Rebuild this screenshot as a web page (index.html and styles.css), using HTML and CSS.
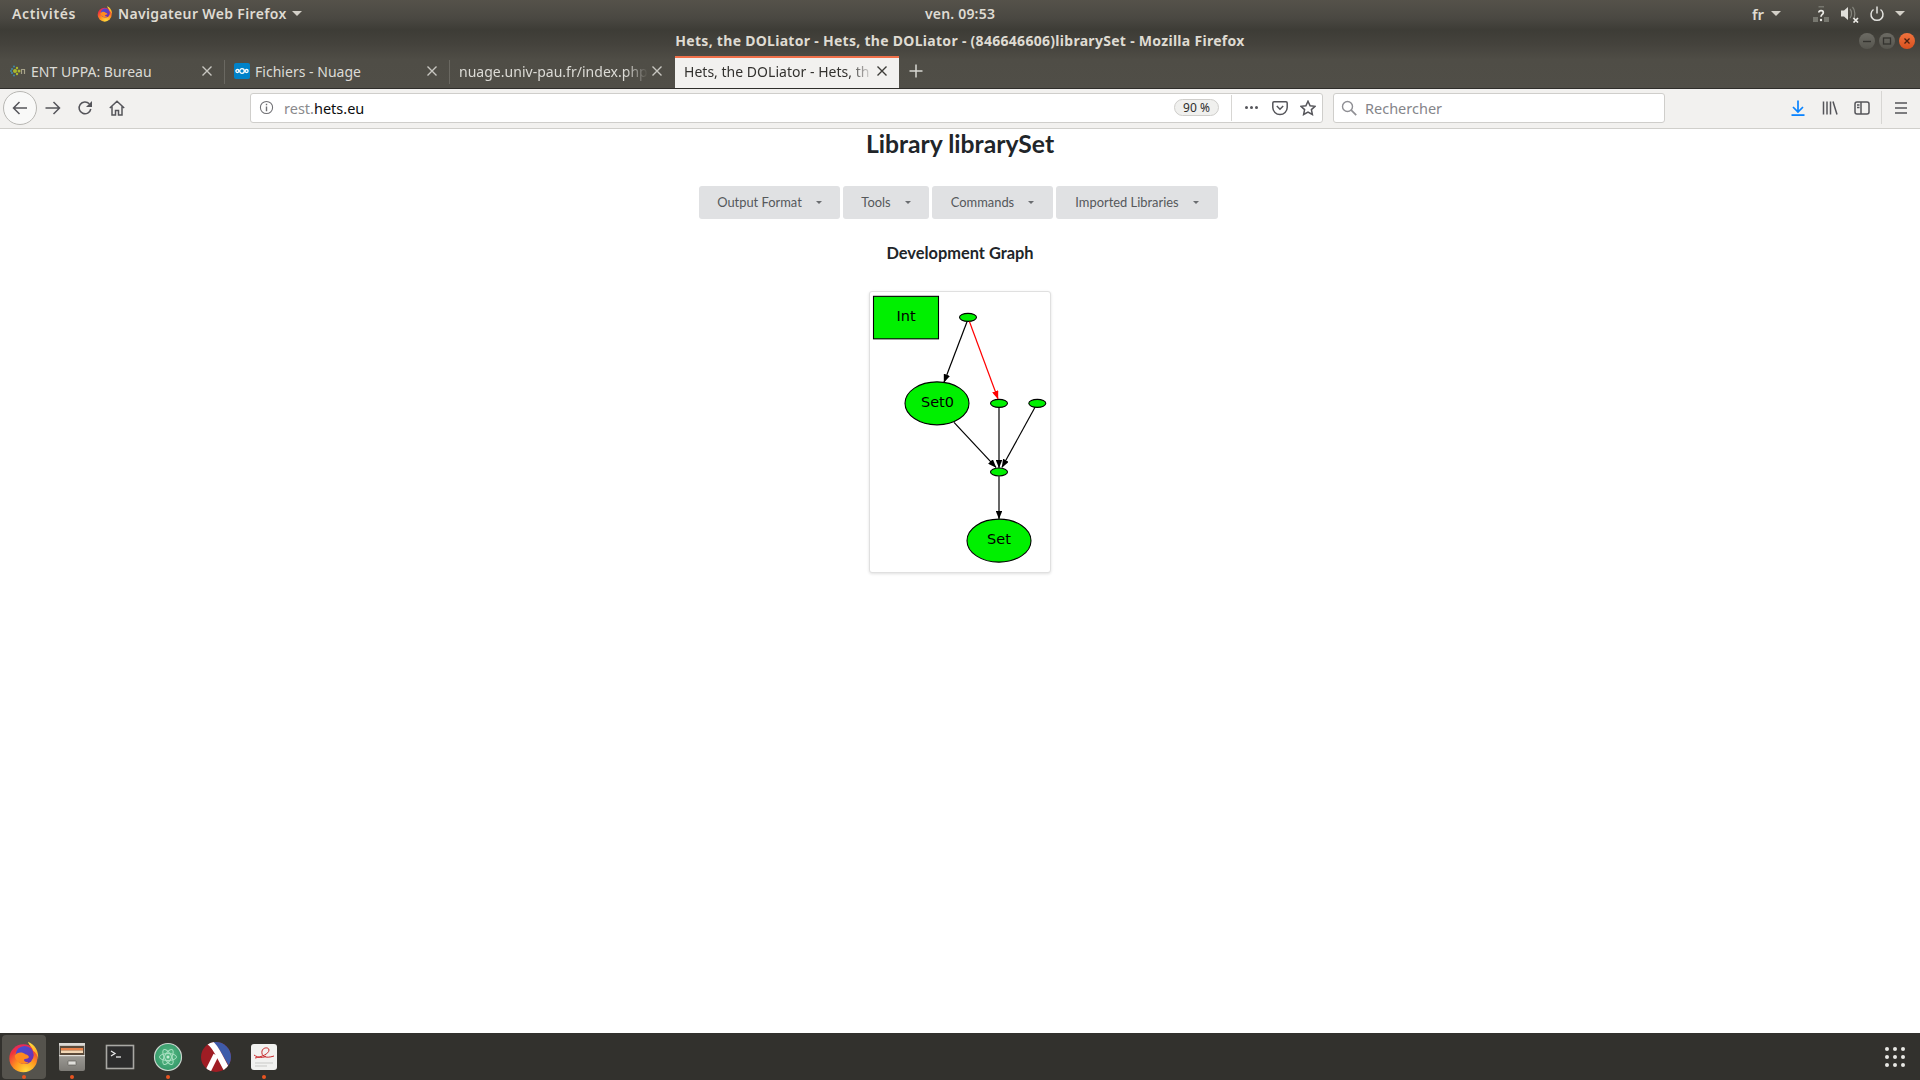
FILE: index.html
```html
<!DOCTYPE html>
<html lang="fr">
<head>
<meta charset="utf-8">
<title>Hets</title>
<link rel="stylesheet" href="styles.css">
</head>
<body>
<div class="screen">
  <header class="chrome-top">
    <div class="panel">
      <div class="panel-left">
        <span class="panel-item">Activités</span>
        <span class="panel-app">
          <svg class="ico16" viewBox="0 0 24 24"><use href="#firefox"/></svg>
          <span>Navigateur Web Firefox</span><i class="caret app-caret"></i>
        </span>
      </div>
      <div class="panel-clock">ven. 09:53</div>
      <div class="panel-right">
        <span class="lang">fr</span><i class="caret lang-caret"></i>
        <svg class="tray net" viewBox="0 0 16 16"><path fill="#77776f" d="M0 11h5v5H0zM11 11h5v5h-5zM5.500 0H11v1.500H5.500z"/><path fill="none" stroke="#ecebe6" stroke-width="1.700" d="M5.800 6.500c.3-2.600 4.600-2.400 4.500.2 0 1.700-2.300 1.700-2.300 4"/><circle cx="8" cy="14" r="1.200" fill="#ecebe6"/></svg>
        <svg class="tray vol" viewBox="0 0 18 18"><path fill="#e0dfda" d="M0 5.500h3L7 2v13L3 11.500H0z"/><path fill="none" stroke="#85857d" stroke-width="1.200" d="M9 4c2 2 2 7 0 9M11.500 2c3 3 3 10 .5 12"/><path stroke="#ecebe6" stroke-width="1.700" d="M12.500 13l4.500 4.500M17 13l-4.500 4.500"/></svg>
        <svg class="tray pow" viewBox="0 0 16 16"><path fill="none" stroke="#e4e4e0" stroke-width="1.500" d="M4.500 3.500a6 6 0 1 0 7 0M8 0.500v7"/></svg>
        <i class="caret last-caret"></i>
      </div>
    </div>
    <div class="titlebar">
      <div class="title">Hets, the DOLiator - Hets, the DOLiator - (846646606)librarySet - Mozilla Firefox</div>
      <div class="winbtns">
        <span class="winbtn"><svg viewBox="0 0 16 16"><path stroke="#34332f" stroke-width="1.400" d="M4 8.500h8"/></svg></span>
        <span class="winbtn"><svg viewBox="0 0 16 16"><rect x="4.500" y="5" width="7" height="6" fill="none" stroke="#34332f" stroke-width="1.300"/></svg></span>
        <span class="winbtn close"><svg viewBox="0 0 16 16"><path stroke="#4a2010" stroke-width="1.300" d="M5.500 5.500l5 5M10.500 5.500l-5 5"/></svg></span>
      </div>
    </div>
    <div class="tabs">
      <div class="tab tab-1">
        <svg class="fav" viewBox="0 0 16 16"><g fill="#3f8aa8"><circle cx="2" cy="6" r="1"/><circle cx="2" cy="10" r="1"/><circle cx="4" cy="3.500" r="1"/><circle cx="4" cy="12.500" r="1"/><circle cx="1" cy="8" r="1"/></g><g fill="#a9b82c"><circle cx="5" cy="8" r="2"/><circle cx="7" cy="5" r="1.200"/><circle cx="7" cy="11" r="1.200"/><circle cx="9" cy="8" r="1.500"/></g><path fill="none" stroke="#a8a38a" stroke-width="1.200" d="M11.500 11V6.500h3V11"/></svg>
        <span class="tab-label">ENT UPPA: Bureau</span>
        <svg class="tab-x" viewBox="0 0 12 12"><path d="M1.500 1.500l9 9M10.500 1.500l-9 9"/></svg>
      </div>
      <i class="tab-sep"></i>
      <div class="tab tab-2">
        <svg class="fav" viewBox="0 0 16 16"><rect width="16" height="16" rx="2" fill="#0082c9"/><g fill="none" stroke="#fff" stroke-width="1.300"><circle cx="8" cy="8" r="2.300"/><circle cx="3.400" cy="8" r="1.500"/><circle cx="12.600" cy="8" r="1.500"/></g></svg>
        <span class="tab-label">Fichiers - Nuage</span>
        <svg class="tab-x" viewBox="0 0 12 12"><path d="M1.500 1.500l9 9M10.500 1.500l-9 9"/></svg>
      </div>
      <i class="tab-sep"></i>
      <div class="tab tab-3">
        <span class="tab-label fade">nuage.univ-pau.fr/index.php</span>
        <svg class="tab-x" viewBox="0 0 12 12"><path d="M1.500 1.500l9 9M10.500 1.500l-9 9"/></svg>
      </div>
      <div class="tab tab-active">
        <span class="tab-label fade">Hets, the DOLiator - Hets, th</span>
        <svg class="tab-x" viewBox="0 0 12 12"><path d="M1.500 1.500l9 9M10.500 1.500l-9 9"/></svg>
      </div>
      <svg class="tab-new" viewBox="0 0 14 14"><path d="M7 0.500v13M0.500 7h13"/></svg>
    </div>
    <div class="toolbar">
      <div class="nav">
        <span class="back"><svg viewBox="0 0 16 16"><path class="tb" d="M15 8H1.500M7.500 2L1.500 8l6 6"/></svg></span>
        <svg class="nav-ico" viewBox="0 0 16 16"><path class="tb" d="M0.500 8H14.500M8.500 2l6 6-6 6"/></svg>
        <svg class="nav-ico" viewBox="0 0 16 16"><path class="tb" d="M13.800 9a5.900 5.900 0 1 1-1.500-5.200"/><path fill="#55555a" d="M15 1v6H9z"/></svg>
        <svg class="nav-ico" viewBox="0 0 16 16"><path class="tb" stroke-width="1.700" d="M0.800 8l7.200-6.700L15.200 8M3 6.500V15h3.500v-4.500h3V15H13V6.500"/></svg>
      </div>
      <div class="urlbar">
        <svg class="info" viewBox="0 0 16 16"><circle cx="8" cy="8" r="6.500" fill="none" stroke="#6f6f73" stroke-width="1.100"/><path stroke="#6f6f73" stroke-width="1.500" d="M8 7v5M8 4v1.600"/></svg>
        <span class="url"><span class="url-dim">rest.</span>hets.eu</span>
        <span class="zoom-badge">90 %</span>
        <i class="url-sep"></i>
        <span class="dots"><i></i><i></i><i></i></span>
        <svg class="url-ico pocket" viewBox="0 0 16 16"><path class="tb" stroke-width="1.600" d="M2 1.800h12a1.200 1.200 0 0 1 1.200 1.200v4.500a7.200 7 0 0 1-14.400 0V3a1.200 1.200 0 0 1 1.200-1.200zM4.800 6l3.200 3.200L11.200 6"/></svg>
        <svg class="url-ico star" viewBox="0 0 16 16"><path class="tb" stroke-width="1.700" d="M8 1.200l2.100 4.500 4.900.6-3.600 3.300 1 4.900L8 12.100l-4.400 2.400 1-4.900L1 6.300l4.900-.6z"/></svg>
      </div>
      <div class="searchbar">
        <svg class="search-ico" viewBox="0 0 16 16"><circle cx="6.500" cy="6.500" r="5" fill="none" stroke="#8f8f94" stroke-width="1.400"/><path stroke="#8f8f94" stroke-width="1.700" d="M10.200 10.200l5 5"/></svg>
        <span>Rechercher</span>
      </div>
      <div class="tools">
        <svg class="t-ico" viewBox="0 0 16 16"><path fill="none" stroke="#0a84ff" stroke-width="1.700" d="M8 0.500v11M3 7l5 5 5-5"/><path stroke="#0a84ff" stroke-width="1.800" d="M1.500 15.100h13"/></svg>
        <svg class="t-ico" viewBox="0 0 16 16"><path class="tb" stroke-width="1.800" d="M1.500 1.500v13M5 1.500v13M8.500 1.500v13M11 1.500l4 13"/></svg>
        <svg class="t-ico side" viewBox="0 0 16 16"><rect x="1" y="2" width="14" height="12" rx="2" class="tb" stroke-width="1.700"/><path class="tb" d="M7 2v12M3 5h2.500M3 7.500h2.500"/></svg>
        <i class="tool-sep"></i>
        <svg class="t-ico menu" viewBox="0 0 16 16"><path class="tb" stroke-width="2" d="M2 3h12M2 8h12M2 13h12"/></svg>
      </div>
    </div>
  </header>

  <main class="page">
    <h1 class="page-title">Library librarySet</h1>
    <nav class="btn-row">
      <button class="btn btn-output">Output Format<i class="btn-caret"></i></button>
      <button class="btn btn-tools">Tools<i class="btn-caret"></i></button>
      <button class="btn btn-commands">Commands<i class="btn-caret"></i></button>
      <button class="btn btn-imported">Imported Libraries<i class="btn-caret"></i></button>
    </nav>
    <h2 class="sub-title">Development Graph</h2>
    <div class="graph-card">
      <svg class="graph" viewBox="9 5.670 182 282">
        <defs>
          <marker id="ab" viewBox="0 0 10 10" refX="9.500" refY="5" markerWidth="8.500" markerHeight="6.500" orient="auto" markerUnits="userSpaceOnUse" preserveAspectRatio="none"><path d="M0 0L10 5L0 10z" fill="#000"/></marker>
          <marker id="ar" viewBox="0 0 10 10" refX="9.500" refY="5" markerWidth="8.500" markerHeight="6.500" orient="auto" markerUnits="userSpaceOnUse" preserveAspectRatio="none"><path d="M0 0L10 5L0 10z" fill="#f00"/></marker>
        </defs>
        <rect class="node" x="13.500" y="11" width="65" height="42.500"/>
        <ellipse class="node" cx="108" cy="32" rx="8.500" ry="4"/>
        <ellipse class="node" cx="77" cy="118" rx="32" ry="21.500"/>
        <ellipse class="node" cx="139" cy="118" rx="8.500" ry="4"/>
        <ellipse class="node" cx="177.300" cy="118" rx="8.500" ry="4"/>
        <ellipse class="node" cx="139" cy="186.700" rx="8.500" ry="4"/>
        <ellipse class="node" cx="139" cy="255.300" rx="32" ry="21.500"/>
        <line class="edge" x1="107" y1="36.500" x2="84" y2="97" marker-end="url(#ab)"/>
        <line class="edge red" x1="109.500" y1="36.500" x2="138" y2="113.500" marker-end="url(#ar)"/>
        <line class="edge" x1="94" y1="137" x2="136" y2="182" marker-end="url(#ab)"/>
        <line class="edge" x1="139" y1="122" x2="139" y2="182.500" marker-end="url(#ab)"/>
        <line class="edge" x1="175" y1="122" x2="142" y2="182" marker-end="url(#ab)"/>
        <line class="edge" x1="139" y1="191" x2="139" y2="233.500" marker-end="url(#ab)"/>
        <text class="label" x="46" y="35.500">Int</text>
        <text class="label" x="77.500" y="121.500">Set0</text>
        <text class="label" x="139" y="258.800">Set</text>
      </svg>
    </div>
  </main>

  <footer class="dock">
    <div class="dock-left">
      <span class="dock-item active">
        <svg class="dock-ico" viewBox="0 0 24 24"><use href="#firefox"/></svg><i class="pip"></i>
      </span>
      <span class="dock-item">
        <svg class="dock-ico" viewBox="0 0 32 32">
          <defs><linearGradient id="cab" x1="0" y1="0" x2="0" y2="1"><stop offset="0" stop-color="#b5b3ad"/><stop offset="1" stop-color="#7d7b76"/></linearGradient></defs>
          <rect x="3" y="2" width="26" height="28" rx="2" fill="url(#cab)"/>
          <rect x="3" y="2" width="26" height="2.500" fill="#dcdad6"/>
          <rect x="4" y="5" width="24" height="9" fill="#5b4a3a"/>
          <rect x="5" y="7" width="22" height="2.500" fill="#e8824a"/>
          <rect x="5" y="9.500" width="22" height="2.500" fill="#f2d7b5"/>
          <rect x="3" y="14" width="26" height="1.200" fill="#e4e2dd"/>
          <rect x="12" y="20" width="8" height="4" rx=".5" fill="#e0dfdb" stroke="#5f5d58" stroke-width=".7"/>
        </svg><i class="pip"></i>
      </span>
      <span class="dock-item">
        <svg class="dock-ico" viewBox="0 0 32 32"><rect x="2.500" y="4.500" width="27" height="23" fill="#2c2c2c" stroke="#a9a8a4" stroke-width="1.600"/><path fill="none" stroke="#e8e8e8" stroke-width="1.300" d="M7 10l4 2.500L7 15"/><path stroke="#e8e8e8" stroke-width="1.300" d="M12 16h5"/></svg>
      </span>
      <span class="dock-item">
        <svg class="dock-ico" viewBox="0 0 32 32">
          <defs><radialGradient id="atom" cx=".5" cy=".45" r=".6"><stop offset="0" stop-color="#5dbf88"/><stop offset="1" stop-color="#2f9466"/></radialGradient></defs>
          <circle cx="16" cy="16" r="13.500" fill="url(#atom)" stroke="#c9d4cd" stroke-width="1.200"/>
          <g fill="none" stroke="#a9e0c2" stroke-width="1"><ellipse cx="16" cy="16" rx="8.500" ry="3.500" transform="rotate(60 16 16)"/><ellipse cx="16" cy="16" rx="8.500" ry="3.500" transform="rotate(-60 16 16)"/><ellipse cx="16" cy="16" rx="8.500" ry="3.500"/></g>
          <circle cx="16" cy="16" r="1.500" fill="#c5ecd6"/>
        </svg><i class="pip"></i>
      </span>
      <span class="dock-item">
        <svg class="dock-ico" viewBox="0 0 32 32">
          <defs><clipPath id="rk"><circle cx="16" cy="16" r="15"/></clipPath></defs>
          <circle cx="16" cy="16" r="15" fill="#9f1d24"/>
          <g clip-path="url(#rk)">
            <path fill="#3e5ba9" d="M10 -1C16 3 19 8 22 13L30 27L34 20V-1z"/>
            <path fill="none" stroke="#fff" stroke-width="6" d="M9 1C14 4 16 9 19 14L28 31"/>
            <path fill="none" stroke="#fff" stroke-width="5.500" d="M16 14L7 32"/>
          </g>
        </svg>
      </span>
      <span class="dock-item">
        <svg class="dock-ico" viewBox="0 0 32 32">
          <rect x="3" y="3" width="26" height="26" rx="3" fill="#f2f2f0"/>
          <path fill="none" stroke="#c8282a" stroke-width="1" d="M7 17c6-1 14-4 14-8 0-3-6-3-7 1-1 5 3 8 12 5M6 14c4 3 10 3 12 1"/>
          <path stroke="#c9c9c6" stroke-width="1" d="M7 22h18M7 25h12"/>
        </svg><i class="pip"></i>
      </span>
    </div>
    <div class="apps-grid"><i></i><i></i><i></i><i></i><i></i><i></i><i></i><i></i><i></i></div>
  </footer>
</div>

<svg class="sprite" aria-hidden="true">
  <defs>
    <radialGradient id="ffo" cx=".6" cy=".95" r="1"><stop offset="0" stop-color="#ffdc3d"/><stop offset=".4" stop-color="#ff9a1f"/><stop offset=".8" stop-color="#f0353a"/><stop offset="1" stop-color="#e0246a"/></radialGradient>
    <linearGradient id="ffb" x1="0" y1="0" x2="1" y2="1"><stop offset="0" stop-color="#3a55d8"/><stop offset="1" stop-color="#7a2aa8"/></linearGradient>
    <linearGradient id="fft" x1="0" y1="0" x2="1" y2="1"><stop offset="0" stop-color="#ffe23d"/><stop offset="1" stop-color="#ff9a1f"/></linearGradient>
    <symbol id="firefox" viewBox="0 0 24 24">
      <circle cx="11.500" cy="13" r="10.500" fill="url(#ffo)"/>
      <circle cx="12.500" cy="10.500" r="6.800" fill="url(#ffb)"/>
      <path fill="#ff8a1f" d="M5 11c2-3 6-3 8-1 2 .5 3 1.500 2.500 2.500-1 1-3 .5-3.500 1.500 0 1.500 2 2 3.500 2-3 2.500-9.500 1-10.500-5z"/>
      <path fill="url(#fft)" d="M15 .5c5 2 8.500 7 7.500 13.500-.3-3-1.800-5.500-3.500-6.500-.5-2.500-3-4-4-7z"/>
    </symbol>
  </defs>
</svg>
</body>
</html>
```
FILE: styles.css
```css
* { box-sizing: border-box; }
html, body { margin: 0; height: 100%; background: #fff; overflow: hidden; }
.screen { display: flex; flex-direction: column; width: 1920px; height: 1080px; font-family: "Lato", sans-serif; }
.sprite { position: absolute; width: 0; height: 0; }

.chrome-top { flex: none; background: linear-gradient(#55524a 0, #4a4842 18px, #3d3c36 30px, #45433d 45px, #4f4d46 60px, #504e47 88px); }
.panel { height: 27px; display: flex; align-items: center; position: relative; padding: 0 12px; color: #dfdbd2; font: 600 14px "Noto Sans", sans-serif; }
.panel-left { display: flex; align-items: center; gap: 21px; }
.panel-item { letter-spacing: .62px; }
.panel-app { display: flex; align-items: center; gap: 5px; letter-spacing: .35px; }
.ico16 { width: 16px; height: 16px; }
.caret { display: inline-block; width: 0; height: 0; border-left: 5px solid transparent; border-right: 5px solid transparent; border-top: 5px solid #d3d0c8; margin-left: 5px; }
.app-caret { margin-left: 0; }
.panel-clock { position: absolute; left: 0; right: 0; text-align: center; letter-spacing: .2px; pointer-events: none; }
.panel-right { margin-left: auto; display: flex; align-items: center; padding-right: 3px; }
.lang { font-size: 15px; }
.lang-caret { margin: 0 32px 0 7px; }
.last-caret { margin-left: 10px; }
.tray { display: block; }
.net { width: 16px; height: 16px; margin-right: 12px; }
.vol { width: 18px; height: 18px; margin-right: 10px; }
.pow { width: 16px; height: 16px; }

.titlebar { height: 29px; display: flex; align-items: center; justify-content: center; position: relative; }
.title { color: #dfdbd2; font: 700 14px "Noto Sans", sans-serif; letter-spacing: .29px; position: relative; top: -1px; }
.winbtns { position: absolute; right: 5px; top: 6px; display: flex; gap: 4px; }
.winbtn { width: 16px; height: 16px; border-radius: 50%; background: linear-gradient(#6c6b64, #56554e); display: block; }
.winbtn svg { display: block; width: 16px; height: 16px; }
.winbtn.close { background: linear-gradient(#f0733e, #d9501e); }

.tabs { height: 32px; display: flex; align-items: stretch; position: relative; }
.tab { height: 32px; display: flex; align-items: center; padding: 0 11px 2px 9px; color: #dcdbd6; font: 14px "Noto Sans", sans-serif; position: relative; }
.tab-1 { width: 224px; padding-left: 10px; }
.tab-2 { width: 224px; }
.tab-3 { width: 225px; padding-right: 12px; }
.tab-active { width: 224px; background: #f2f1ef; color: #33322f; border-top: 2px solid #f0704a; padding-bottom: 4px; }
.tab-sep { width: 1px; height: 24px; background: #6a6861; margin-top: 4px; flex: none; }
.fav { width: 16px; height: 16px; flex: none; margin-right: 5px; }
.tab-label { flex: 1; min-width: 0; white-space: nowrap; overflow: hidden; letter-spacing: .02px; }
.fade { overflow: visible; -webkit-mask-image: linear-gradient(90deg, #000 88%, transparent); mask-image: linear-gradient(90deg, #000 88%, transparent); }
.tab-x { width: 12px; height: 12px; flex: none; margin-left: 8px; fill: none; stroke: #c8c7c1; stroke-width: 1.400; }
.tab-3 .tab-x, .tab-active .tab-x { margin-left: 3px; }
.tab-active .tab-x { stroke: #3d3c38; }
.tab-new { width: 14px; height: 14px; margin: 8px 0 0 10px; fill: none; stroke: #d8d7d2; stroke-width: 1.500; }

.toolbar { height: 41px; padding-bottom: 2px; background: #f2f1ef; border-top: 1px solid #2e2d2a; border-bottom: 1px solid #d0cfcb; display: flex; align-items: center; position: relative; }
.tb { fill: none; stroke: #55555a; stroke-width: 1.500; }
.nav { width: 250px; flex: none; display: flex; align-items: center; padding-left: 3px; gap: 16px; }
.back { width: 34px; height: 34px; border: 1px solid #b8b7b3; border-radius: 50%; background: #f9f9f8; display: flex; align-items: center; justify-content: center; margin-right: -8px; flex: none; }
.back svg { width: 16px; height: 16px; }
.nav-ico { width: 16px; height: 16px; flex: none; }
.urlbar { width: 1073px; height: 30px; background: #fff; border: 1px solid #cfcecb; border-radius: 3px; display: flex; align-items: center; padding-left: 8px; font: 14.500px "Noto Sans", sans-serif; color: #0c0c0d; flex: none; }
.info { width: 15px; height: 15px; margin-right: 10px; }
.url { flex: 1; }
.url-dim { color: #8a8a8d; }
.zoom-badge { width: 45px; height: 17px; border: 1px solid #cfcecb; border-radius: 9px; background: #f0f0ee; font-size: 12px; line-height: 15px; text-align: center; color: #2c2c2c; }
.url-sep { width: 1px; height: 26px; background: #d7d6d3; margin: 0 13px 0 12px; }
.dots { display: flex; gap: 2px; width: 16px; margin-right: 11px; }
.dots i { width: 3px; height: 3px; border-radius: 50%; background: #55555a; }
.url-ico { width: 16px; height: 16px; flex: none; }
.star { margin-right: 6px; }
.pocket { margin-right: 12px; }
.searchbar { width: 332px; height: 30px; margin-left: 10px; background: #fff; border: 1px solid #cfcecb; border-radius: 3px; display: flex; align-items: center; padding-left: 7px; color: #85858a; font: 14.500px "Noto Sans", sans-serif; flex: none; }
.search-ico { width: 16px; height: 16px; margin-right: 8px; }
.tools { flex: 1; display: flex; align-items: center; padding-left: 125px; }
.t-ico { width: 16px; height: 16px; margin-right: 16px; flex: none; }
.t-ico.side { margin-right: 11px; }
.t-ico.menu { margin: 0 0 0 11px; }
.tool-sep { width: 1px; height: 33px; background: #d7d6d3; }

.page { flex: 1; background: #fff; display: flex; flex-direction: column; align-items: center; color: #212529; }
.page-title { margin: 0; font: 700 24.700px/30px "Lato", sans-serif; height: 57px; }
.btn-row { display: flex; gap: 3px; margin-right: 3px; }
.btn { height: 33px; border: 0; border-radius: 3px; background: #e0e1e3; color: #55585b; font: 12.900px "Lato", sans-serif; display: flex; align-items: center; justify-content: center; padding: 0 0 1px; }
.btn-output { width: 141px; }
.btn-tools { width: 86px; }
.btn-commands { width: 121px; }
.btn-imported { width: 162px; }
.btn-caret { width: 0; height: 0; border-left: 3.500px solid transparent; border-right: 3.500px solid transparent; border-top: 3.500px solid #6a6d70; margin-left: 14px; }
.sub-title { margin: 24px 0 0; font: 700 16.400px/19px "Lato", sans-serif; height: 48px; color: #212529; }
.graph-card { width: 182px; height: 282px; background: #fff; border: 1px solid #e0e0e0; border-radius: 3px; box-shadow: 0 1px 3px rgba(0,0,0,.12); overflow: hidden; }
.graph { display: block; width: 182px; height: 282px; margin: -1px; }
.node { fill: #00f000; stroke: #000; stroke-width: 1.100; }
.edge { stroke: #000; stroke-width: 1.200; }
.edge.red { stroke: #f00; stroke-width: 1.200; }
.label { font: 14.500px "DejaVu Sans", sans-serif; text-anchor: middle; fill: #000; }

.dock { flex: none; height: 47px; background: #32312d; display: flex; align-items: center; justify-content: space-between; padding: 0 15px 0 2px; }
.dock-left { display: flex; gap: 4px; }
.dock-item { width: 44px; height: 44px; display: flex; align-items: center; justify-content: center; position: relative; border-radius: 4px; }
.dock-item.active { background: #55534d; }
.dock-ico { width: 32px; height: 32px; }
.pip { position: absolute; left: 20px; bottom: 0; width: 4px; height: 4px; border-radius: 50%; background: #e95420; }
.apps-grid { display: grid; grid-template-columns: repeat(3, 4px); gap: 4px; }
.apps-grid i { width: 4px; height: 4px; background: #e8e8e4; border-radius: 50%; }
```
